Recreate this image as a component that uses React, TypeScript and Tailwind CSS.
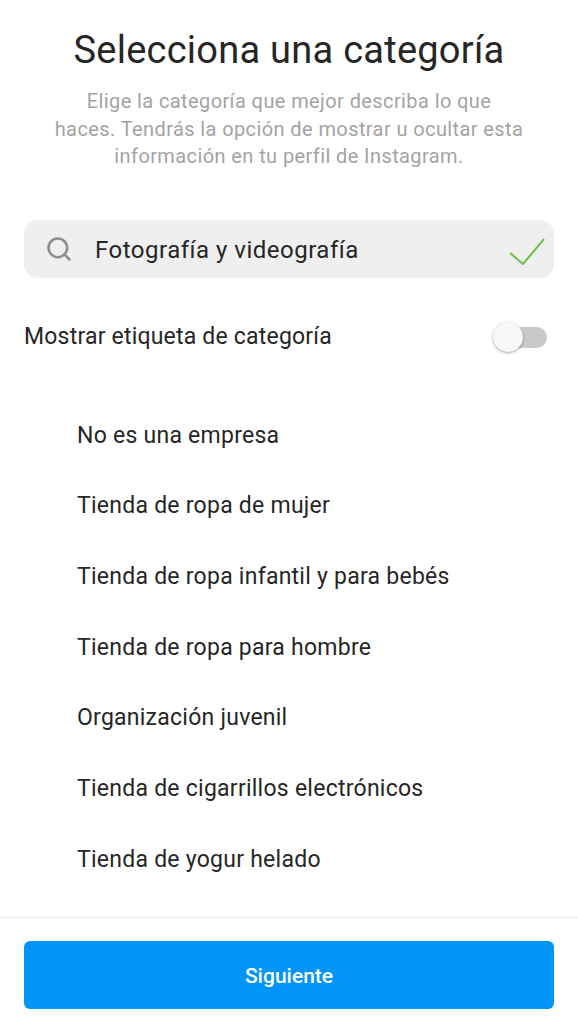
import { Search } from "lucide-react";

const categories = [
  "No es una empresa",
  "Tienda de ropa de mujer",
  "Tienda de ropa infantil y para bebés",
  "Tienda de ropa para hombre",
  "Organización juvenil",
  "Tienda de cigarrillos electrónicos",
  "Tienda de yogur helado",
];

export default function App() {
  return (
    <div className="w-[578px] h-[1024px] bg-white flex flex-col overflow-hidden font-['Roboto',sans-serif] text-[#262626]">
      <div className="flex-1 px-6 pt-[26px]">
        <h1 className="text-center text-[38px] leading-[48px] tracking-[0.25px]">Selecciona una categoría</h1>
        <p className="mt-[14px] text-center text-[#a3a3a3] text-[20px] leading-[27.5px] tracking-[0.4px] whitespace-nowrap">
          Elige la categoría que mejor describa lo que
          <br />
          haces. Tendrás la opción de mostrar u ocultar esta
          <br />
          información en tu perfil de Instagram.
        </p>

        <div className="mt-[49px] h-[58px] rounded-[14px] bg-[#efefef] flex items-center pl-[21px] pr-[9px]">
          <Search size={28} strokeWidth={2.2} className="text-[#8e8e8e]" />
          <span className="ml-[22px] pt-[3px] flex-1 text-[24px] tracking-[0.5px]">Fotografía y videografía</span>
          <svg width="36" height="27" viewBox="0 0 36 27" fill="none" stroke="#6cc04a" strokeWidth="2" className="mt-[6px]">
            <path d="M1 15 L14 26 L35 1" />
          </svg>
        </div>

        <div className="mt-[30px] flex items-center justify-between">
          <span className="text-[23px] tracking-[0.2px] leading-[58px]">Mostrar etiqueta de categoría</span>
          <div className="relative w-[54px] h-[30px] mr-[7px]">
            <div className="absolute left-[2px] right-0 top-[5px] h-[21px] rounded-full bg-[#c9c9c9]" />
            <div className="absolute left-0 top-0 w-[30px] h-[30px] rounded-full bg-[#f8f8f8] shadow-[0_1px_3px_rgba(0,0,0,0.35)]" />
          </div>
        </div>

        <ul className="mt-[35px] pl-[53px]">
          {categories.map((c) => (
            <li key={c} className="h-[70.7px] flex items-center text-[23px] tracking-[0.25px]">{c}</li>
          ))}
        </ul>
      </div>

      <div className="border-t border-[#ebebeb] h-[107px] px-6 pt-[23px]">
        <button className="w-full h-[68px] pt-[4px] rounded-[6px] bg-[#0095f6] text-white text-[21px] font-medium">Siguiente</button>
      </div>
    </div>
  );
}
